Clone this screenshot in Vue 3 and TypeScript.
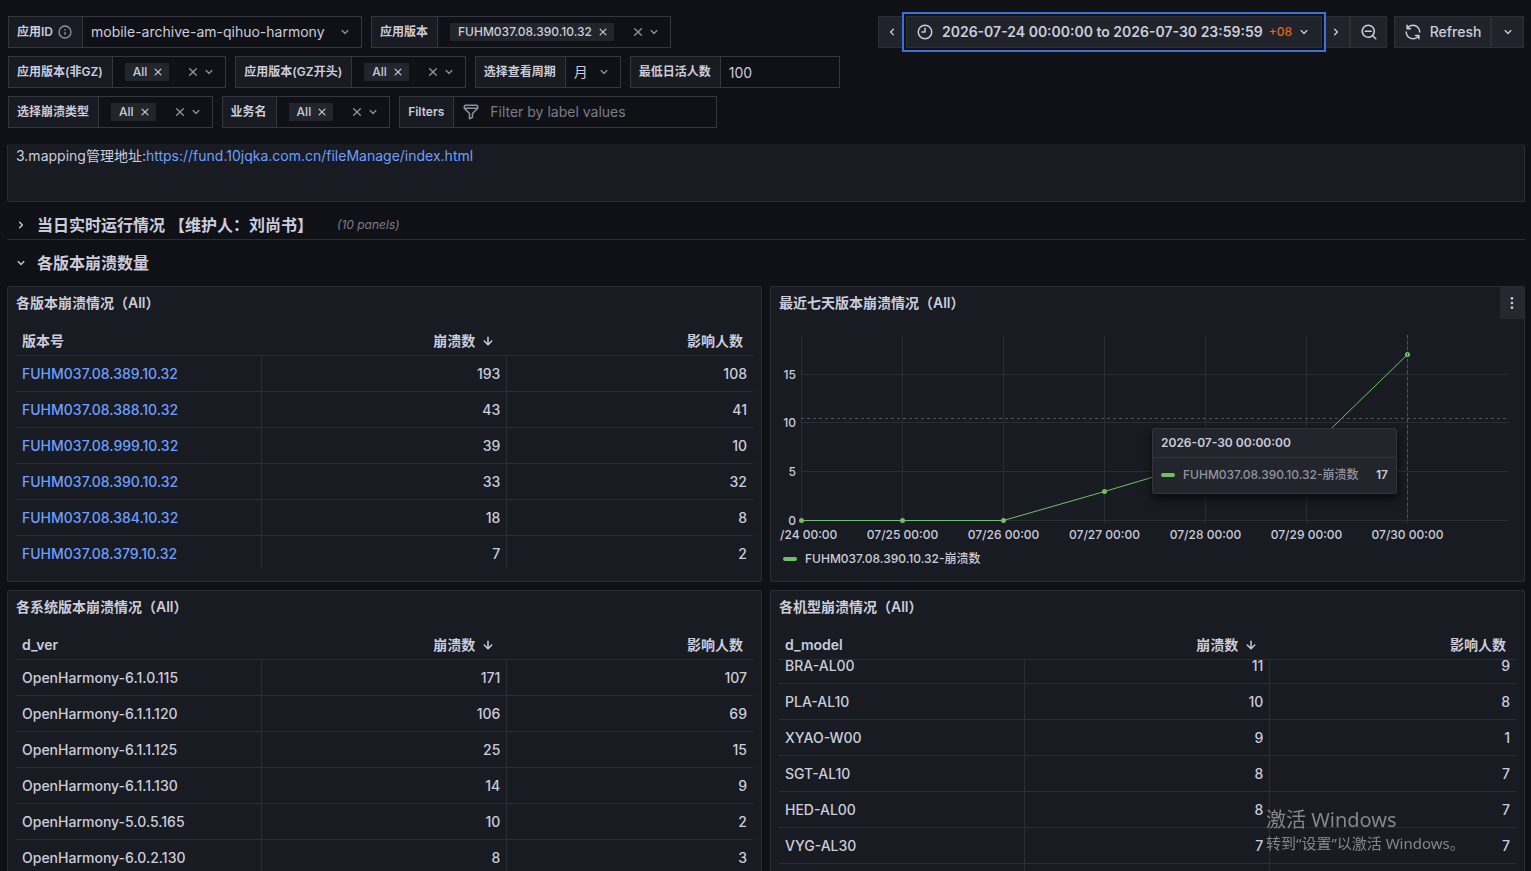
<script setup lang="ts">
import { computed, onBeforeUnmount, onMounted, ref } from 'vue'

interface Variable {
  id: string
  label: string
  kind: 'select' | 'multi' | 'text' | 'filter'
  value: string
  info?: boolean
}

interface TablePanel {
  title: string
  columns: string[]
  rows: [string, string, string][]
  linked?: boolean
  scroll?: number
}

const icons: Record<string, string> = {
  down: 'M17,9.17a1,1,0,0,0-1.41,0L12,12.71,8.46,9.17a1,1,0,0,0-1.41,0,1,1,0,0,0,0,1.42l4.24,4.24a1,1,0,0,0,1.42,0L17,10.59A1,1,0,0,0,17,9.17Z',
  right: 'M14.83,11.29,10.59,7.05a1,1,0,0,0-1.42,0,1,1,0,0,0,0,1.41L12.71,12,9.17,15.54a1,1,0,0,0,0,1.41,1,1,0,0,0,.71.29,1,1,0,0,0,.71-.29l4.24-4.24A1,1,0,0,0,14.83,11.29Z',
  left: 'M11.29,12l3.54-3.54a1,1,0,0,0,0-1.41,1,1,0,0,0-1.42,0L9.17,11.29a1,1,0,0,0,0,1.42L13.41,17a1,1,0,0,0,.71.29,1,1,0,0,0,.71-.29,1,1,0,0,0,0-1.41Z',
  times: 'M13.41,12l4.3-4.29a1,1,0,1,0-1.42-1.42L12,10.59,7.71,6.29A1,1,0,0,0,6.29,7.71L10.59,12l-4.3,4.29a1,1,0,0,0,0,1.42,1,1,0,0,0,1.42,0L12,13.41l4.29,4.3a1,1,0,0,0,1.42,0,1,1,0,0,0,0-1.42Z',
  arrowDown: 'M17.71,11.29a1,1,0,0,0-1.42,0L13,14.59V7a1,1,0,0,0-2,0v7.59l-3.29-3.3a1,1,0,0,0-1.42,1.42l5,5a1,1,0,0,0,.33.21.94.94,0,0,0,.76,0,1,1,0,0,0,.33-.21l5-5A1,1,0,0,0,17.71,11.29Z',
  info: 'M12,2A10,10,0,1,0,22,12,10,10,0,0,0,12,2Zm0,18a8,8,0,1,1,8-8A8,8,0,0,1,12,20Zm0-8.5a1,1,0,0,0-1,1v3a1,1,0,0,0,2,0v-3A1,1,0,0,0,12,11.5Zm0-4a1.25,1.25,0,1,0,1.25,1.25A1.25,1.25,0,0,0,12,7.5Z',
  clock: 'M12,2A10,10,0,1,0,22,12,10,10,0,0,0,12,2Zm0,18a8,8,0,1,1,8-8A8,8,0,0,1,12,20ZM12,6a1,1,0,0,0-1,1v4H8a1,1,0,0,0,0,2h4a1,1,0,0,0,1-1V7A1,1,0,0,0,12,6Z',
  zoomOut: 'M21.71,20.29,18,16.61A9,9,0,1,0,16.61,18l3.68,3.68a1,1,0,0,0,1.42,0A1,1,0,0,0,21.71,20.29ZM11,18a7,7,0,1,1,7-7A7,7,0,0,1,11,18Zm4-8H7a1,1,0,0,0,0,2h8a1,1,0,0,0,0-2Z',
  sync: 'M19.91,15.51H15.38a1,1,0,0,0,0,2h2.4A8,8,0,0,1,4,12a1,1,0,0,0-2,0,10,10,0,0,0,16.88,7.23V21a1,1,0,0,0,2,0V16.5A1,1,0,0,0,19.91,15.51ZM12,2A10,10,0,0,0,5.12,4.77V3a1,1,0,0,0-2,0V7.5a1,1,0,0,0,1,1h4.5a1,1,0,0,0,0-2H6.22A8,8,0,0,1,20,12a1,1,0,0,0,2,0A10,10,0,0,0,12,2Z',
  filter: 'M19,2H5A3,3,0,0,0,2,5V6.17a3,3,0,0,0,.25,1.2l0,.06a2.81,2.81,0,0,0,.59.86L9,14.41V21a1,1,0,0,0,.47.85A1,1,0,0,0,10,22a1,1,0,0,0,.45-.11l4-2A1,1,0,0,0,15,19V14.41l6.12-6.12a2.81,2.81,0,0,0,.59-.86l0-.06A3,3,0,0,0,22,6.17V5A3,3,0,0,0,19,2ZM13.29,13.29A1,1,0,0,0,13,14v4.38l-2,1V14a1,1,0,0,0-.29-.71L5.41,8H18.59ZM20,6H4V5A1,1,0,0,1,5,4H19a1,1,0,0,1,1,1Z',
}

const variables = ref<Variable[]>([
  { id: 'app-id', label: '应用ID', kind: 'select', value: 'mobile-archive-am-qihuo-harmony', info: true },
  { id: 'app-version', label: '应用版本', kind: 'multi', value: 'FUHM037.08.390.10.32' },
  { id: 'version-other', label: '应用版本(非GZ)', kind: 'multi', value: 'All' },
  { id: 'version-gz', label: '应用版本(GZ开头)', kind: 'multi', value: 'All' },
  { id: 'period', label: '选择查看周期', kind: 'select', value: '月' },
  { id: 'min-active', label: '最低日活人数', kind: 'text', value: '100' },
  { id: 'crash-type', label: '选择崩溃类型', kind: 'multi', value: 'All' },
  { id: 'business', label: '业务名', kind: 'multi', value: 'All' },
  { id: 'filters', label: 'Filters', kind: 'filter', value: '' },
])

const versionTable: TablePanel = {
  title: '各版本崩溃情况（All）',
  columns: ['版本号', '崩溃数', '影响人数'],
  linked: true,
  rows: [
    ['FUHM037.08.389.10.32', '193', '108'],
    ['FUHM037.08.388.10.32', '43', '41'],
    ['FUHM037.08.999.10.32', '39', '10'],
    ['FUHM037.08.390.10.32', '33', '32'],
    ['FUHM037.08.384.10.32', '18', '8'],
    ['FUHM037.08.379.10.32', '7', '2'],
  ],
}

const systemTable: TablePanel = {
  title: '各系统版本崩溃情况（All）',
  columns: ['d_ver', '崩溃数', '影响人数'],
  rows: [
    ['OpenHarmony-6.1.0.115', '171', '107'],
    ['OpenHarmony-6.1.1.120', '106', '69'],
    ['OpenHarmony-6.1.1.125', '25', '15'],
    ['OpenHarmony-6.1.1.130', '14', '9'],
    ['OpenHarmony-5.0.5.165', '10', '2'],
    ['OpenHarmony-6.0.2.130', '8', '3'],
  ],
}

const modelTable: TablePanel = {
  title: '各机型崩溃情况（All）',
  columns: ['d_model', '崩溃数', '影响人数'],
  scroll: 12,
  rows: [
    ['BRA-AL00', '11', '9'],
    ['PLA-AL10', '10', '8'],
    ['XYAO-W00', '9', '1'],
    ['SGT-AL10', '8', '7'],
    ['HED-AL00', '8', '7'],
    ['VYG-AL30', '7', '7'],
    ['', '', ''],
  ],
}

const cells: (TablePanel | null)[] = [versionTable, null, systemTable, modelTable]

const seriesName = 'FUHM037.08.390.10.32-崩溃数'
const points = [0, 0, 0, 3, 6, 7, 17]
const firstDayLabel = '/24 00:00'
const dayLabels = ['07/25', '07/26', '07/27', '07/28', '07/29', '07/30'].map((d) => d + ' 00:00')
const yTicks = [0, 5, 10, 15]

const plotLeft = 22
const plotTop = 17
const plotBottom = 201
const chartEl = ref<HTMLElement[]>([])
const chartWidth = ref(738)
const plotRight = computed(() => chartWidth.value - 8)
const xAt = (day: number) => Math.round(plotLeft + ((plotRight.value - plotLeft) * day) / 7) + 0.5
const yAt = (v: number) => Math.round(plotBottom - v * 9.76) + 0.5
const linePath = computed(() => points.map((v, i) => `${xAt(i)},${yAt(v)}`).join(' '))
const tooltipStyle = computed(() => ({ left: `${Math.round(xAt(6) - 256)}px` }))

let observer: ResizeObserver | undefined
onMounted(() => {
  document.querySelectorAll<HTMLElement>('[data-scroll]').forEach((el) => {
    el.scrollTop = Number(el.dataset.scroll)
  })
  const el = chartEl.value[0]
  if (el) {
    chartWidth.value = el.clientWidth
    observer = new ResizeObserver(() => (chartWidth.value = el.clientWidth))
    observer.observe(el)
  }
})
onBeforeUnmount(() => observer?.disconnect())
</script>

<template>
  <div class="dashboard">
    <header class="controls">
      <div class="variables">
        <div v-for="v in variables" :key="v.id" class="variable">
          <label class="var-label" :for="v.id">
            {{ v.label }}
            <svg v-if="v.info" class="icon info" viewBox="0 0 24 24"><path :d="icons.info" /></svg>
          </label>
          <div v-if="v.kind === 'select'" class="field">
            <select :id="v.id" v-model="v.value" class="select" :class="{ wide: v.value.length > 10 }">
              <option>{{ v.value }}</option>
            </select>
            <svg class="icon select-arrow" viewBox="0 0 24 24"><path :d="icons.down" /></svg>
          </div>
          <div v-else-if="v.kind === 'multi'" class="field multi">
            <span class="tag">
              {{ v.value }}
              <button type="button" class="bare" aria-label="Remove">
                <svg class="icon small" viewBox="0 0 24 24"><path :d="icons.times" /></svg>
              </button>
            </span>
            <input :id="v.id" class="multi-input" type="text" role="combobox" aria-expanded="false" />
            <button type="button" class="bare dim" aria-label="Clear">
              <svg class="icon" viewBox="0 0 24 24"><path :d="icons.times" /></svg>
            </button>
            <button type="button" class="bare dim" aria-label="Open">
              <svg class="icon" viewBox="0 0 24 24"><path :d="icons.down" /></svg>
            </button>
          </div>
          <div v-else-if="v.kind === 'text'" class="field">
            <input :id="v.id" v-model="v.value" class="text-input" type="text" />
          </div>
          <div v-else class="field filter">
            <svg class="icon filter-icon" viewBox="0 0 24 24"><path :d="icons.filter" /></svg>
            <input :id="v.id" v-model="v.value" class="filter-input" type="text" placeholder="Filter by label values" />
          </div>
        </div>
      </div>

      <div class="time-controls">
        <div class="button-group">
          <button type="button" class="tool narrow" aria-label="Move time range backwards">
            <svg class="icon" viewBox="0 0 24 24"><path :d="icons.left" /></svg>
          </button>
          <button type="button" class="tool time-range">
            <svg class="icon large" viewBox="0 0 24 24"><path :d="icons.clock" /></svg>
            <span>2026-07-24 00:00:00 to 2026-07-30 23:59:59</span>
            <span class="zone">+08</span>
            <svg class="icon" viewBox="0 0 24 24"><path :d="icons.down" /></svg>
          </button>
          <button type="button" class="tool narrow" aria-label="Move time range forwards">
            <svg class="icon" viewBox="0 0 24 24"><path :d="icons.right" /></svg>
          </button>
          <button type="button" class="tool square" aria-label="Zoom out">
            <svg class="icon large" viewBox="0 0 24 24"><path :d="icons.zoomOut" /></svg>
          </button>
        </div>
        <div class="button-group">
          <button type="button" class="tool refresh">
            <svg class="icon large" viewBox="0 0 24 24"><path :d="icons.sync" /></svg>
            <span>Refresh</span>
          </button>
          <button type="button" class="tool interval" aria-label="Refresh interval">
            <svg class="icon" viewBox="0 0 24 24"><path :d="icons.down" /></svg>
          </button>
        </div>
      </div>
    </header>

    <main class="content">
      <section class="panel note">
        3.mapping管理地址:<a href="https://fund.10jqka.com.cn/fileManage/index.html">https://fund.10jqka.com.cn/fileManage/index.html</a>
      </section>

      <div class="row collapsed">
        <button type="button" class="bare row-title">
          <svg class="icon" viewBox="0 0 24 24"><path :d="icons.right" /></svg>
          <span>当日实时运行情况 【维护人：刘尚书】</span>
        </button>
        <span class="row-count">(10 panels)</span>
      </div>
      <div class="row">
        <button type="button" class="bare row-title">
          <svg class="icon" viewBox="0 0 24 24"><path :d="icons.down" /></svg>
          <span>各版本崩溃数量</span>
        </button>
      </div>

      <div class="grid">
        <template v-for="(p, n) in cells" :key="n">
          <section v-if="p" class="panel">
            <h2 class="panel-title">{{ p.title }}</h2>
            <div class="table-scroll" :data-scroll="p.scroll ?? 0">
              <table>
                <thead>
                  <tr>
                    <th v-for="(c, i) in p.columns" :key="c" scope="col">
                      <span class="th-inner">
                        {{ c }}
                        <svg v-if="i === 1" class="icon large" viewBox="0 0 24 24"><path :d="icons.arrowDown" /></svg>
                      </span>
                    </th>
                  </tr>
                </thead>
                <tbody>
                  <tr v-for="r in p.rows" :key="r[0]">
                    <td v-for="(cell, i) in r" :key="i">
                      <a v-if="p.linked && i === 0" href="#">{{ cell }}</a>
                      <template v-else>{{ cell }}</template>
                    </td>
                  </tr>
                </tbody>
              </table>
            </div>
          </section>

          <section v-else class="panel chart-panel">
            <div class="panel-head">
              <h2 class="panel-title">最近七天版本崩溃情况（All）</h2>
              <button type="button" class="menu" aria-label="Menu">
                <svg class="icon" viewBox="0 0 24 24">
                  <circle cx="12" cy="5" r="2" /><circle cx="12" cy="12" r="2" /><circle cx="12" cy="19" r="2" />
                </svg>
              </button>
            </div>
            <div ref="chartEl" class="chart">
              <svg class="plot" :width="chartWidth" height="228">
                <g class="gridlines">
                  <line v-for="t in yTicks" :key="t" :x1="plotLeft" :x2="plotRight" :y1="yAt(t)" :y2="yAt(t)" />
                  <line v-for="i in 7" :key="i" :x1="xAt(i - 1)" :x2="xAt(i - 1)" :y1="plotTop" :y2="plotBottom + 4" />
                </g>
                <text v-for="t in yTicks" :key="'y' + t" class="axis" x="17" :y="yAt(t) + 4" text-anchor="end">{{ t }}</text>
                <text class="axis" x="1" y="220">{{ firstDayLabel }}</text>
                <text v-for="(d, i) in dayLabels" :key="d" class="axis" :x="xAt(i + 1)" y="220" text-anchor="middle">{{ d }}</text>
                <polyline class="series" :points="linePath" />
                <circle v-for="(v, i) in points" :key="'p' + i" class="dot" :cx="xAt(i)" :cy="yAt(v)" r="2.5" />
                <line class="cursor" :x1="plotLeft" :x2="plotRight" y1="99.5" y2="99.5" />
                <line class="cursor" :x1="xAt(6)" :x2="xAt(6)" y1="16" :y2="plotBottom" />
              </svg>
              <div class="tooltip" :style="tooltipStyle">
                <div class="tooltip-head">2026-07-30 00:00:00</div>
                <div class="tooltip-row">
                  <span class="swatch"></span>
                  <span class="tooltip-name">{{ seriesName }}</span>
                  <span class="tooltip-value">17</span>
                </div>
              </div>
            </div>
            <button type="button" class="bare legend">
              <span class="swatch"></span>
              <span>{{ seriesName }}</span>
            </button>
          </section>
        </template>
      </div>
    </main>

    <aside class="watermark">
      <p class="watermark-title">激活 Windows</p>
      <p class="watermark-text">转到“设置”以激活 Windows。</p>
    </aside>
  </div>
</template>

<style>
body {
  background: #0f1117;
}
</style>

<style scoped>
* {
  box-sizing: border-box;
}

.dashboard {
  --bg: #0f1117;
  --panel: #181b21;
  --border: #2c2e35;
  --field-border: #35373e;
  --text: #ccccdc;
  --dim: #9090a0;
  --link: #6e9fff;
  --green: #73bf69;
  height: 100vh;
  overflow: hidden;
  position: relative;
  display: flex;
  flex-direction: column;
  background: var(--bg);
  color: var(--text);
  font: 400 14px/22px Inter, "Noto Sans CJK SC", sans-serif;
}

button,
input,
select {
  font: inherit;
  color: inherit;
  margin: 0;
  border-radius: 0;
}

a {
  color: var(--link);
  text-decoration: none;
}

.icon {
  width: 16px;
  height: 16px;
  fill: currentColor;
  flex: none;
  display: block;
}
.icon.small {
  width: 14px;
  height: 14px;
}
.icon.info {
  color: var(--dim);
}
.icon.large {
  width: 18px;
  height: 18px;
}

.bare {
  display: flex;
  align-items: center;
  padding: 0;
  border: 0;
  background: none;
}
.dim {
  color: var(--dim);
}

.controls {
  display: flex;
  align-items: flex-start;
  gap: 8px;
  padding: 16px 7px 16px 8px;
}
.variables {
  flex: 1;
  display: flex;
  flex-wrap: wrap;
  gap: 8px 9px;
}
.variable {
  display: flex;
  height: 32px;
}
.var-label {
  display: flex;
  align-items: center;
  gap: 4px;
  padding: 0 9px 0 8px;
  border: 1px solid var(--field-border);
  background: var(--panel);
  font-size: 12px;
  font-weight: 600;
  white-space: nowrap;
}
.field {
  position: relative;
  display: flex;
  align-items: center;
  margin-left: -1px;
  border: 1px solid var(--field-border);
}
.select {
  height: 100%;
  padding: 0 32px 0 8px;
  border: 0;
  background: transparent;
  appearance: none;
}
.select.wide {
  min-width: 278px;
}
.select-arrow {
  position: absolute;
  right: 8px;
  color: var(--dim);
  pointer-events: none;
}
.multi {
  padding: 0 8px 0 12px;
}
.tag {
  display: flex;
  align-items: center;
  gap: 4px;
  height: 18px;
  padding: 0 4px 0 8px;
  background: #22252b;
  font-size: 12px;
  font-weight: 500;
  line-height: 18px;
}
.multi-input {
  width: 16px;
  padding: 0;
  border: 0;
  outline: 0;
  background: transparent;
}
.text-input {
  width: 118px;
  height: 100%;
  padding: 0 8px;
  border: 0;
  background: transparent;
}
.filter {
  gap: 10px;
  padding: 0 8px;
}
.filter-icon {
  width: 18px;
  height: 18px;
  color: var(--dim);
}
.filter-input {
  width: 218px;
  padding: 0;
  border: 0;
  background: transparent;
}
.filter-input::placeholder {
  color: #7b7c88;
  opacity: 1;
}

.time-controls {
  display: flex;
  gap: 7px;
}
.button-group {
  display: flex;
}
.tool {
  display: flex;
  align-items: center;
  justify-content: center;
  gap: 8px;
  height: 32px;
  padding: 0;
  border: 1px solid #2d3037;
  background: #20232a;
  font-weight: 500;
  white-space: nowrap;
}
.tool + .tool {
  border-left-width: 0;
}
.narrow {
  width: 28px;
}
.tool.time-range {
  position: relative;
  z-index: 1;
  min-width: 416px;
  padding: 0 8px;
  border-left-width: 1px;
  box-shadow: 0 0 0 2px var(--bg), 0 0 0 4px #3d71d9;
  font-weight: 600;
}
.zone {
  margin-left: -2px;
  margin-right: -4px;
  color: #e8661a;
  font-size: 12px;
  font-weight: 500;
}
.tool.square {
  width: 37px;
  border-left-width: 1px;
}
.refresh {
  width: 97px;
}
.tool.interval {
  width: 33px;
  border-left-width: 1px;
}

.content {
  flex: 1;
  min-height: 0;
  overflow: hidden;
  display: flex;
  flex-direction: column;
  gap: 8px;
  padding: 0 6px 0 7px;
}
.content > * {
  flex: none;
}
.panel {
  display: flex;
  flex-direction: column;
  min-width: 0;
  border: 1px solid var(--border);
  border-radius: 2px;
  background: var(--panel);
}
.note {
  display: block;
  height: 58px;
  padding: 1px 8px;
  border-top: 0;
}
.row {
  display: flex;
  align-items: center;
  gap: 24px;
  height: 30px;
  padding-left: 6px;
}
.collapsed {
  border-bottom: 1px solid var(--border);
}
.row-title {
  gap: 8px;
  font-size: 16px;
  font-weight: 600;
}
.row-count {
  color: #7b7c88;
  font-size: 12px;
  font-style: italic;
}

.grid {
  display: grid;
  grid-template-columns: repeat(2, minmax(0, 1fr));
  grid-auto-rows: 296px;
  gap: 8px;
}
.panel-title {
  margin: 0;
  padding: 0 8px;
  font-size: 14px;
  font-weight: 600;
  line-height: 32px;
}
.panel-head {
  display: flex;
  justify-content: space-between;
}
.menu {
  display: flex;
  align-items: center;
  justify-content: center;
  width: 24px;
  height: 32px;
  padding: 0;
  border: 0;
  background: #26282f;
}

.table-scroll {
  height: 249px;
  margin: 0 8px;
  overflow: hidden;
}
table {
  width: 100%;
  table-layout: fixed;
  border-collapse: separate;
  border-spacing: 0;
}
thead th {
  position: sticky;
  top: 0;
  height: 37px;
  padding: 11px 10px 3px 6px;
  background: var(--panel);
  border-bottom: 1px solid var(--border);
  font-weight: 600;
  text-align: left;
}
.th-inner {
  display: flex;
  align-items: center;
  gap: 4px;
}
th + th .th-inner {
  justify-content: flex-end;
}
td {
  height: 36px;
  padding: 0 6px;
  border-bottom: 1px solid var(--border);
  border-right: 1px solid var(--border);
  font-weight: 500;
}
td:last-child {
  border-right: 0;
}
td + td {
  text-align: right;
}

.chart {
  position: relative;
  margin: 0 8px;
}
.plot {
  display: block;
}
.gridlines line {
  stroke: #2a2d34;
}
.axis {
  fill: var(--text);
  font-size: 12px;
  font-weight: 500;
}
.series {
  fill: none;
  stroke: var(--green);
}
.dot {
  fill: var(--green);
}
.cursor {
  stroke: #53555e;
  stroke-dasharray: 3 3;
}
.tooltip {
  position: absolute;
  top: 109px;
  width: 245px;
  border: 1px solid #31343b;
  border-radius: 2px;
  background: #22252b;
  box-shadow: 0 4px 8px rgba(1, 4, 9, 0.75);
  font-size: 12px;
  line-height: 18px;
}
.tooltip-head {
  padding: 5px 8px;
  border-bottom: 1px solid #31343b;
  font-weight: 600;
}
.tooltip-row {
  display: flex;
  align-items: center;
  gap: 8px;
  padding: 8px 8px 9px;
}
.tooltip-name {
  color: #9394a1;
  font-weight: 500;
}
.tooltip-value {
  margin-left: auto;
  font-weight: 600;
}
.swatch {
  width: 14px;
  height: 4px;
  border-radius: 2px;
  background: var(--green);
}
.legend {
  gap: 8px;
  margin: 1px 12px;
  font-size: 12px;
  font-weight: 500;
}

.watermark {
  position: absolute;
  right: 65px;
  bottom: 18px;
  width: 200px;
  color: #85878b;
  font-family: "Noto Sans", "Noto Sans CJK SC", sans-serif;
  font-weight: 400;
  pointer-events: none;
  white-space: nowrap;
}
.watermark p {
  margin: 0;
}
.watermark-title {
  font-size: 20px;
  line-height: 26px;
}
.watermark-text {
  font-size: 15px;
  line-height: 20px;
}
</style>
